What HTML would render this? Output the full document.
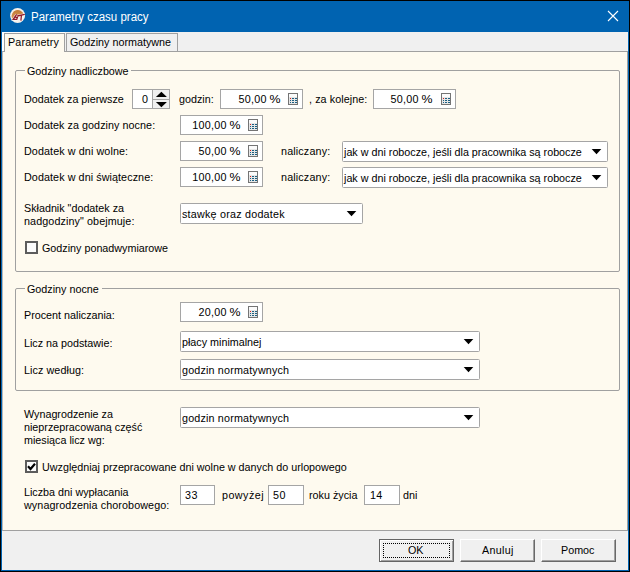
<!DOCTYPE html>
<html><head><meta charset="utf-8">
<style>
*{box-sizing:border-box;margin:0;padding:0}
html,body{width:630px;height:572px;overflow:hidden;background:#000}
body{position:relative;font-family:"Liberation Sans",sans-serif;font-size:10.75px;color:#000}
.a{position:absolute}
.t{position:absolute;line-height:13px;white-space:pre;font-size:10.75px;color:#000}
.r{text-align:right}
.box{position:absolute;background:#fff;border:1px solid #a5a5a5}
.grp{position:absolute;border:1px solid #a0a0a0;border-radius:2px}
.dd{position:absolute;background:#fff;border:1px solid #a5a5a5;border-radius:1.5px}
.tri{position:absolute;width:0;height:0;border-left:4.5px solid transparent;border-right:4.5px solid transparent;border-top:5px solid #000}
.btn{position:absolute;background:#f0f0f0;height:23px;width:75px;border-top:1px solid #fff;border-left:1px solid #fff;border-right:1px solid #696969;border-bottom:1px solid #696969;box-shadow:inset -1px -1px 0 #a0a0a0}
.cb{position:absolute;width:13px;height:13px;border:2px solid #5c5c5c;background:#fbfbfb}
</style></head><body>
<div class="a" style="left:1px;top:1px;width:628px;height:570px;background:#0063b1"></div>
<div class="a" style="left:2px;top:32px;width:626px;height:538px;background:#f0f0f0"></div>
<svg class="a" style="left:9px;top:7px" width="18" height="18" viewBox="0 0 18 18">
 <defs><linearGradient id="g1" x1="0" y1="0" x2="0" y2="1"><stop offset="0" stop-color="#c07834"/><stop offset="1" stop-color="#dc9a58"/></linearGradient></defs>
 <circle cx="8.6" cy="8.5" r="7.5" fill="#f6f1ea"/>
 <path d="M2.9 10.8 A5.7 5.7 0 1 1 14.6 7.3 L4 12.3 Z" fill="url(#g1)"/>
 <path d="M7.6 7.4 L4.2 12.3 L7.8 12.3 L8.4 10.3 L6.4 10.3 M8.3 9 L15.8 7.3 M12.4 8.4 L11.9 13.6" stroke="#fff" stroke-width="2.4" fill="none" opacity="0.85"/>
 <path d="M7.6 7.4 L4.2 12.3 L7.8 12.3 L8.4 10.3 L6.4 10.3 M8.3 9 L15.8 7.3 M12.4 8.4 L11.9 13.6" stroke="#921a28" stroke-width="1.3" fill="none"/>
</svg>
<div class="t" style="left:31px;top:11px;font-size:12.3px;transform:scaleX(0.935);transform-origin:0 0;color:#fff">Parametry czasu pracy</div>
<svg class="a" style="left:607px;top:10px" width="12" height="12" viewBox="0 0 12 12"><path d="M1 1 L11 11 M11 1 L1 11" stroke="#fff" stroke-width="1.1"/></svg>
<div class="a" style="left:2px;top:51px;width:626px;height:480px;background:#fefaef;border-top:1px solid #a0a0a0;border-left:1px solid #b8b8b8;border-bottom:1px solid #a0a0a0;border-right:1px solid #a0a0a0"></div>
<div class="a" style="left:2px;top:32px;width:63px;height:19px;background:#fff"></div>
<div class="a" style="left:4px;top:33px;width:61px;height:19px;background:#fefaef;border:1px solid #a0a0a0;border-bottom:none"></div>
<div class="t" style="left:8px;top:36px;letter-spacing:0.15px">Parametry</div>
<div class="a" style="left:66px;top:33px;width:112px;height:19px;background:#f0f0f0;border:1px solid #a0a0a0"></div>
<div class="t" style="left:70px;top:36px;">Godziny normatywne</div>
<div class="grp" style="left:15px;top:70px;width:605px;height:202px"></div>
<div class="a" style="left:25px;top:64px;width:106px;height:12px;background:#fefaef"></div>
<div class="t" style="left:27px;top:65px;">Godziny nadliczbowe</div>
<div class="t" style="left:24px;top:93px;">Dodatek za pierwsze</div>
<div class="box" style="left:132px;top:89px;width:38px;height:20px;"></div>
<div class="t" style="left:142px;top:93px;">0</div>
<div class="a" style="left:152px;top:90px;width:1px;height:18px;background:#a5a5a5"></div>
<div class="a" style="left:153px;top:90px;width:16px;height:18px;background:#f0f0f0"></div>
<div class="a" style="left:153px;top:99px;width:16px;height:1px;background:#a5a5a5"></div>
<svg class="a" style="left:153px;top:90px" width="16" height="18" viewBox="0 0 16 18"><polygon points="2.9,7 13.9,7 8.4,1.8" fill="#000"/><polygon points="2.9,12 13.9,12 8.4,17.2" fill="#000"/></svg>
<div class="t" style="left:179px;top:93px;">godzin:</div>
<div class="box" style="left:220px;top:89px;width:83px;height:20px;"></div>
<div class="t r" style="left:161px;width:120px;top:93px;letter-spacing:0.25px;word-spacing:1.2px">50,00 <span style="display:inline-block;transform:scaleX(1.15);transform-origin:100% 0">%</span></div>
<svg class="a" style="left:288px;top:93px" width="10" height="12" viewBox="0 0 10 12"><rect x="0.5" y="0.5" width="9" height="11" fill="#e6e6e6" stroke="#747474"/><rect x="1" y="1" width="8" height="3" fill="#fbfbfb"/><rect x="2" y="5" width="1" height="1" fill="#e01818"/><rect x="2" y="7" width="1" height="1" fill="#1b5f82"/><rect x="2" y="9" width="1" height="1" fill="#1b5f82"/><rect x="4" y="5" width="2" height="1" fill="#1b5f82"/><rect x="7" y="5" width="2" height="1" fill="#1b5f82"/><rect x="4" y="7" width="2" height="1" fill="#1b5f82"/><rect x="7" y="7" width="2" height="1" fill="#1b5f82"/><rect x="4" y="9" width="2" height="1" fill="#1b5f82"/><rect x="7" y="9" width="2" height="1" fill="#1b5f82"/></svg>
<div class="t" style="left:309px;top:93px;letter-spacing:0.08px">, za kolejne:</div>
<div class="box" style="left:373px;top:89px;width:83px;height:20px;"></div>
<div class="t r" style="left:313px;width:120px;top:93px;letter-spacing:0.25px;word-spacing:1.2px">50,00 <span style="display:inline-block;transform:scaleX(1.15);transform-origin:100% 0">%</span></div>
<svg class="a" style="left:441px;top:93px" width="10" height="12" viewBox="0 0 10 12"><rect x="0.5" y="0.5" width="9" height="11" fill="#e6e6e6" stroke="#747474"/><rect x="1" y="1" width="8" height="3" fill="#fbfbfb"/><rect x="2" y="5" width="1" height="1" fill="#e01818"/><rect x="2" y="7" width="1" height="1" fill="#1b5f82"/><rect x="2" y="9" width="1" height="1" fill="#1b5f82"/><rect x="4" y="5" width="2" height="1" fill="#1b5f82"/><rect x="7" y="5" width="2" height="1" fill="#1b5f82"/><rect x="4" y="7" width="2" height="1" fill="#1b5f82"/><rect x="7" y="7" width="2" height="1" fill="#1b5f82"/><rect x="4" y="9" width="2" height="1" fill="#1b5f82"/><rect x="7" y="9" width="2" height="1" fill="#1b5f82"/></svg>
<div class="t" style="left:24px;top:119px;letter-spacing:0.06px">Dodatek za godziny nocne:</div>
<div class="box" style="left:180px;top:115px;width:83px;height:20px;"></div>
<div class="t r" style="left:121px;width:120px;top:119px;letter-spacing:0.25px;word-spacing:1.2px">100,00 <span style="display:inline-block;transform:scaleX(1.15);transform-origin:100% 0">%</span></div>
<svg class="a" style="left:248px;top:119px" width="10" height="12" viewBox="0 0 10 12"><rect x="0.5" y="0.5" width="9" height="11" fill="#e6e6e6" stroke="#747474"/><rect x="1" y="1" width="8" height="3" fill="#fbfbfb"/><rect x="2" y="5" width="1" height="1" fill="#e01818"/><rect x="2" y="7" width="1" height="1" fill="#1b5f82"/><rect x="2" y="9" width="1" height="1" fill="#1b5f82"/><rect x="4" y="5" width="2" height="1" fill="#1b5f82"/><rect x="7" y="5" width="2" height="1" fill="#1b5f82"/><rect x="4" y="7" width="2" height="1" fill="#1b5f82"/><rect x="7" y="7" width="2" height="1" fill="#1b5f82"/><rect x="4" y="9" width="2" height="1" fill="#1b5f82"/><rect x="7" y="9" width="2" height="1" fill="#1b5f82"/></svg>
<div class="t" style="left:24px;top:145px;letter-spacing:0.1px">Dodatek w dni wolne:</div>
<div class="box" style="left:180px;top:141px;width:83px;height:20px;"></div>
<div class="t r" style="left:121px;width:120px;top:145px;letter-spacing:0.25px;word-spacing:1.2px">50,00 <span style="display:inline-block;transform:scaleX(1.15);transform-origin:100% 0">%</span></div>
<svg class="a" style="left:248px;top:145px" width="10" height="12" viewBox="0 0 10 12"><rect x="0.5" y="0.5" width="9" height="11" fill="#e6e6e6" stroke="#747474"/><rect x="1" y="1" width="8" height="3" fill="#fbfbfb"/><rect x="2" y="5" width="1" height="1" fill="#e01818"/><rect x="2" y="7" width="1" height="1" fill="#1b5f82"/><rect x="2" y="9" width="1" height="1" fill="#1b5f82"/><rect x="4" y="5" width="2" height="1" fill="#1b5f82"/><rect x="7" y="5" width="2" height="1" fill="#1b5f82"/><rect x="4" y="7" width="2" height="1" fill="#1b5f82"/><rect x="7" y="7" width="2" height="1" fill="#1b5f82"/><rect x="4" y="9" width="2" height="1" fill="#1b5f82"/><rect x="7" y="9" width="2" height="1" fill="#1b5f82"/></svg>
<div class="t" style="left:281px;top:145px;letter-spacing:0.15px">naliczany:</div>
<div class="dd" style="left:342px;top:141px;width:266px;height:21px"></div>
<div class="t" style="left:344px;top:146px;letter-spacing:0px">jak w dni robocze, jeśli dla pracownika są robocze</div>
<svg class="a" style="left:591px;top:149px" width="11" height="6" viewBox="0 0 11 6"><polygon points="0.7,0 10.3,0 5.5,5.3" fill="#000"/></svg>
<div class="t" style="left:24px;top:171px;letter-spacing:0.08px">Dodatek w dni świąteczne:</div>
<div class="box" style="left:180px;top:167px;width:83px;height:20px;"></div>
<div class="t r" style="left:121px;width:120px;top:171px;letter-spacing:0.25px;word-spacing:1.2px">100,00 <span style="display:inline-block;transform:scaleX(1.15);transform-origin:100% 0">%</span></div>
<svg class="a" style="left:248px;top:171px" width="10" height="12" viewBox="0 0 10 12"><rect x="0.5" y="0.5" width="9" height="11" fill="#e6e6e6" stroke="#747474"/><rect x="1" y="1" width="8" height="3" fill="#fbfbfb"/><rect x="2" y="5" width="1" height="1" fill="#e01818"/><rect x="2" y="7" width="1" height="1" fill="#1b5f82"/><rect x="2" y="9" width="1" height="1" fill="#1b5f82"/><rect x="4" y="5" width="2" height="1" fill="#1b5f82"/><rect x="7" y="5" width="2" height="1" fill="#1b5f82"/><rect x="4" y="7" width="2" height="1" fill="#1b5f82"/><rect x="7" y="7" width="2" height="1" fill="#1b5f82"/><rect x="4" y="9" width="2" height="1" fill="#1b5f82"/><rect x="7" y="9" width="2" height="1" fill="#1b5f82"/></svg>
<div class="t" style="left:281px;top:171px;letter-spacing:0.15px">naliczany:</div>
<div class="dd" style="left:342px;top:167px;width:266px;height:21px"></div>
<div class="t" style="left:344px;top:172px;letter-spacing:0px">jak w dni robocze, jeśli dla pracownika są robocze</div>
<svg class="a" style="left:591px;top:175px" width="11" height="6" viewBox="0 0 11 6"><polygon points="0.7,0 10.3,0 5.5,5.3" fill="#000"/></svg>
<div class="t" style="left:24px;top:202px;">Składnik "dodatek za</div>
<div class="t" style="left:24px;top:215px;letter-spacing:0.1px">nadgodziny" obejmuje:</div>
<div class="dd" style="left:180px;top:203px;width:183px;height:21px"></div>
<div class="t" style="left:182px;top:208px;letter-spacing:0.22px">stawkę oraz dodatek</div>
<svg class="a" style="left:346px;top:211px" width="11" height="6" viewBox="0 0 11 6"><polygon points="0.7,0 10.3,0 5.5,5.3" fill="#000"/></svg>
<div class="cb" style="left:25px;top:241px"></div>
<div class="t" style="left:42px;top:242px;">Godziny ponadwymiarowe</div>
<div class="grp" style="left:15px;top:288px;width:605px;height:103px"></div>
<div class="a" style="left:25px;top:282px;width:77px;height:12px;background:#fefaef"></div>
<div class="t" style="left:27px;top:283px;">Godziny nocne</div>
<div class="t" style="left:24px;top:309px;">Procent naliczania:</div>
<div class="box" style="left:180px;top:302px;width:83px;height:20px;"></div>
<div class="t r" style="left:121px;width:120px;top:306px;letter-spacing:0.25px;word-spacing:1.2px">20,00 <span style="display:inline-block;transform:scaleX(1.15);transform-origin:100% 0">%</span></div>
<svg class="a" style="left:248px;top:306px" width="10" height="12" viewBox="0 0 10 12"><rect x="0.5" y="0.5" width="9" height="11" fill="#e6e6e6" stroke="#747474"/><rect x="1" y="1" width="8" height="3" fill="#fbfbfb"/><rect x="2" y="5" width="1" height="1" fill="#e01818"/><rect x="2" y="7" width="1" height="1" fill="#1b5f82"/><rect x="2" y="9" width="1" height="1" fill="#1b5f82"/><rect x="4" y="5" width="2" height="1" fill="#1b5f82"/><rect x="7" y="5" width="2" height="1" fill="#1b5f82"/><rect x="4" y="7" width="2" height="1" fill="#1b5f82"/><rect x="7" y="7" width="2" height="1" fill="#1b5f82"/><rect x="4" y="9" width="2" height="1" fill="#1b5f82"/><rect x="7" y="9" width="2" height="1" fill="#1b5f82"/></svg>
<div class="t" style="left:24px;top:337px;">Licz na podstawie:</div>
<div class="dd" style="left:180px;top:331px;width:300px;height:21px"></div>
<div class="t" style="left:182px;top:336px;letter-spacing:0px">płacy minimalnej</div>
<svg class="a" style="left:463px;top:339px" width="11" height="6" viewBox="0 0 11 6"><polygon points="0.7,0 10.3,0 5.5,5.3" fill="#000"/></svg>
<div class="t" style="left:24px;top:364px;letter-spacing:0.08px">Licz według:</div>
<div class="dd" style="left:180px;top:359px;width:300px;height:21px"></div>
<div class="t" style="left:182px;top:364px;letter-spacing:0.17px">godzin normatywnych</div>
<svg class="a" style="left:463px;top:367px" width="11" height="6" viewBox="0 0 11 6"><polygon points="0.7,0 10.3,0 5.5,5.3" fill="#000"/></svg>
<div class="t" style="left:24px;top:408px;">Wynagrodzenie za
nieprzepracowaną część
miesiąca licz wg:</div>
<div class="dd" style="left:180px;top:407px;width:300px;height:21px"></div>
<div class="t" style="left:182px;top:412px;letter-spacing:0.17px">godzin normatywnych</div>
<svg class="a" style="left:463px;top:415px" width="11" height="6" viewBox="0 0 11 6"><polygon points="0.7,0 10.3,0 5.5,5.3" fill="#000"/></svg>
<div class="cb" style="left:25px;top:460px"></div>
<svg class="a" style="left:25px;top:460px" width="13" height="13" viewBox="0 0 13 13"><path d="M3 6.3 L5.5 9 L10 3.8" stroke="#000" stroke-width="2.2" fill="none"/></svg>
<div class="t" style="left:42px;top:461px;">Uwzględniaj przepracowane dni wolne w danych do urlopowego</div>
<div class="t" style="left:24px;top:486px;">Liczba dni wypłacania</div>
<div class="t" style="left:24px;top:499px;letter-spacing:0.1px">wynagrodzenia chorobowego:</div>
<div class="box" style="left:180px;top:485px;width:35px;height:20px;"></div>
<div class="t" style="left:185px;top:489px;letter-spacing:0.6px">33</div>
<div class="t" style="left:222px;top:489px;letter-spacing:0.45px">powyżej</div>
<div class="box" style="left:268px;top:485px;width:36px;height:20px;"></div>
<div class="t" style="left:273px;top:489px;letter-spacing:0.6px">50</div>
<div class="t" style="left:309px;top:489px;">roku życia</div>
<div class="box" style="left:364px;top:485px;width:36px;height:20px;"></div>
<div class="t" style="left:370px;top:489px;letter-spacing:0.3px">14</div>
<div class="t" style="left:403px;top:489px;">dni</div>
<div class="btn" style="left:379px;top:539px;border:1px solid #646464;box-shadow:inset 1px 1px 0 #fff,inset -1px -1px 0 #a0a0a0"></div>
<div class="a" style="left:383px;top:543px;width:67px;height:15px;border:1px dotted #000"></div>
<div class="t" style="left:408px;top:544px;">OK</div>
<div class="btn" style="left:460px;top:539px"></div>
<div class="t" style="left:482px;top:544px;letter-spacing:0.3px">Anuluj</div>
<div class="btn" style="left:541px;top:539px"></div>
<div class="t" style="left:561px;top:544px;">Pomoc</div>
</body></html>
